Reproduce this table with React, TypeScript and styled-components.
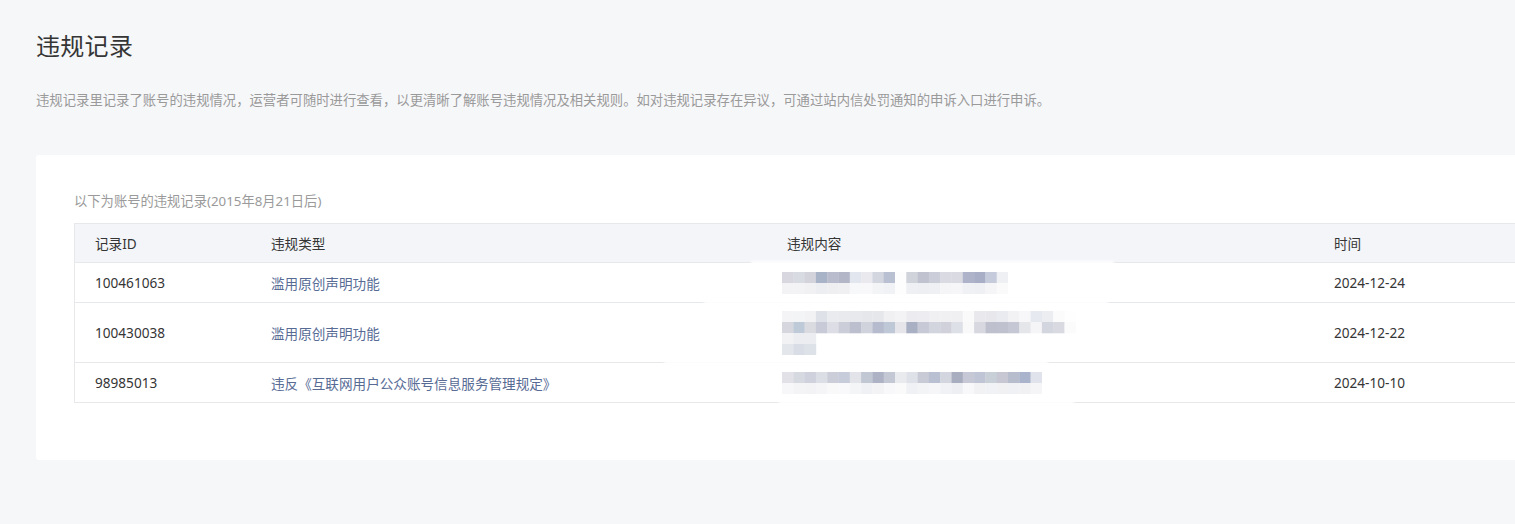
import React from "react";
import styled, { createGlobalStyle } from "styled-components";

const GlobalStyle = createGlobalStyle`
  html, body {
    margin: 0;
    padding: 0;
    background: #f6f7f9;
  }
  body {
    font-family: "Noto Sans", "Noto Sans CJK SC", sans-serif;
    color: #333;
  }
`;

const Page = styled.div`
  padding: 30px 0 63px 36px;
`;

const Title = styled.h1`
  margin: 0;
  font-size: 24px;
  line-height: 32px;
  font-weight: 400;
  color: #353535;
  letter-spacing: 0.3px;
`;

const Desc = styled.p`
  margin: 28px 0 0;
  font-size: 13.35px;
  line-height: 20px;
  color: #9a9a9a;
`;

const Card = styled.section`
  margin-top: 45px;
  background: #fff;
  border-radius: 3px 0 0 3px;
  padding: 36px 0 57px 38px;
`;

const Caption = styled.div`
  font-size: 13.3px;
  line-height: 20px;
  color: #9a9a9a;
  margin-bottom: 12px;
`;

const Table = styled.div`
  position: relative;
  border: 1px solid #e7e8ec;
  border-right: none;
  border-bottom: none;
`;

const Row = styled.div<{ $head?: boolean }>`
  display: grid;
  grid-template-columns: 176px 516px 547px 1fr;
  min-height: ${(p) => (p.$head ? "38px" : "39px")};
  background: ${(p) => (p.$head ? "#f4f5f8" : "#fff")};
  border-bottom: 1px solid #e7e8ec;
`;

const Cell = styled.div<{ $link?: boolean }>`
  display: flex;
  align-items: center;
  padding: 0 20px;
  font-size: 13.6px;
  color: ${(p) => (p.$link ? "#576b95" : "#353535")};
  white-space: nowrap;
`;

const MosaicCell = styled.div`
  display: flex;
  align-items: center;
  padding: 7.5px 15px;
`;

const Patch = styled.div<{ $l: number; $t: number; $w: number }>`
  position: absolute;
  left: ${(p) => p.$l}px;
  top: ${(p) => p.$t}px;
  width: ${(p) => p.$w}px;
  height: 5px;
  background: #fff;
  filter: blur(1.5px);
  pointer-events: none;
`;

const CW = 11.3;
const CH = 11;

function Mosaic({ strips }: { strips: string[][] }) {
  const w = Math.max(...strips.map((s) => s.length)) * CW;
  const h = strips.length * CH;
  return (
    <svg width={w} height={h} viewBox={`0 0 ${w} ${h}`} aria-hidden>
      {strips.map((s, r) =>
        s.map((c, i) => (
          <rect
            key={`${r}-${i}`}
            x={i * CW}
            y={r * CH}
            width={CW + 0.3}
            height={CH + 0.3}
            fill={c}
          />
        ))
      )}
    </svg>
  );
}

const m1 = [
  ["#d8d6de","#d9dbe3","#d3d3dc","#a9b3c7","#b8bccc","#b3b6c7","#e2e6ee","#eaeaee","#d3d6df","#b8c0d1","#fdfdfe","#d1d3db","#c0c2cf","#cbcdd8","#d9dae2","#d9dae2","#afb3c9","#a7aec5","#c6cbdb","#eef0f3"],
  ["#f3f3f5","#f3f3f5","#f1f1f4","#eceef2","#efeff2","#f0f0f3","#f7f8fa","#f8f8fa","#f3f4f6","#f1f2f5","#fdfdfe","#eef0f3","#eeeff3","#eff0f4","#f5f5f7","#f6f6f8","#f0f1f4","#eff0f3","#f5f5f7","#fafafa"],
];

const m2 = [
  ["#f4f4f6","#f3f4f6","#f2f2f4","#dfe1e8","#eaebef","#e8eaee","#e8e9ed","#e6e7eb","#e6e7eb","#f0f0f3","#f3f3f5","#ececf0","#ededf1","#f0f0f3","#f0f0f3","#f0f0f3","#fafafb","#e9e9ed","#e8e8ec","#e9ebf0","#f2f2f4","#f7f7f9","#e6e9ef","#ebedf1","#fbfbfc","#fefefe"],
  ["#d6d7de","#bfcad8","#d9dbe1","#c8cad7","#dcdde5","#cbcdd8","#bcbfcd","#d0d3dc","#b6bccd","#bfc8d6","#e6e5ea","#aab0c3","#c7cad6","#d2d5de","#d0d1da","#dde0e6","#f9f9fa","#d8d8e0","#bec0ce","#bfc1cf","#c5c7d4","#e5e6ea","#f5f5f7","#d4d6df","#d8d9e1","#fbfbfc"],
  ["#f2f2f4","#ecedf0","#ecedf1"],
  ["#e3e6ea","#d9dde5","#dde1e8"],
];

const m3 = [
  ["#e1e1e7","#d7d9e1","#cfd1dc","#dcdee6","#cbced9","#c7ccda","#e3e4e9","#c2c7d4","#adb2c5","#c4c8d5","#e9eaee","#dfe1e8","#c8cad6","#b9c0d2","#d3d6df","#a9adc0","#c6c9d5","#c0c5d5","#c9cfd6","#c6c7d3","#b8bdcd","#a9b3cb","#e0e3eb"],
  ["#f7f7f9","#f4f4f6","#f3f3f6","#f5f5f7","#f9f9fa","#f9f9fb","#f4f5f7","#f0f1f4","#f3f3f6","#f8f8fa","#fafafa","#f0f1f4","#f3f4f6","#f6f6f8","#f1f2f5","#eeeff3","#f8f8fa","#f2f2f5","#f1f2f5","#f1f1f4","#f0f1f4","#f1f1f4","#f5f5f7"],
];

const records = [
  { id: "100461063", type: "滥用原创声明功能", mosaic: m1, time: "2024-12-24" },
  { id: "100430038", type: "滥用原创声明功能", mosaic: m2, time: "2024-12-22" },
  { id: "98985013", type: "违反《互联网用户公众账号信息服务管理规定》", mosaic: m3, time: "2024-10-10" },
];

export default function App() {
  return (
    <>
      <GlobalStyle />
      <Page>
        <Title>违规记录</Title>
        <Desc>
          违规记录里记录了账号的违规情况，运营者可随时进行查看，以更清晰了解账号违规情况及相关规则。如对违规记录存在异议，可通过站内信处罚通知的申诉入口进行申诉。
        </Desc>
        <Card>
          <Caption>以下为账号的违规记录(2015年8月21日后)</Caption>
          <Table>
            <Row $head>
              <Cell>记录ID</Cell>
              <Cell>违规类型</Cell>
              <Cell>违规内容</Cell>
              <Cell>时间</Cell>
            </Row>
            {records.map((r) => (
              <Row key={r.id}>
                <Cell>{r.id}</Cell>
                <Cell $link>{r.type}</Cell>
                <MosaicCell>
                  <Mosaic strips={r.mosaic} />
                </MosaicCell>
                <Cell>{r.time}</Cell>
              </Row>
            ))}
            <Patch $l={676} $t={37} $w={363} />
            <Patch $l={629} $t={77} $w={404} />
            <Patch $l={589} $t={137} $w={384} />
            <Patch $l={704} $t={177} $w={295} />
          </Table>
        </Card>
      </Page>
    </>
  );
}
